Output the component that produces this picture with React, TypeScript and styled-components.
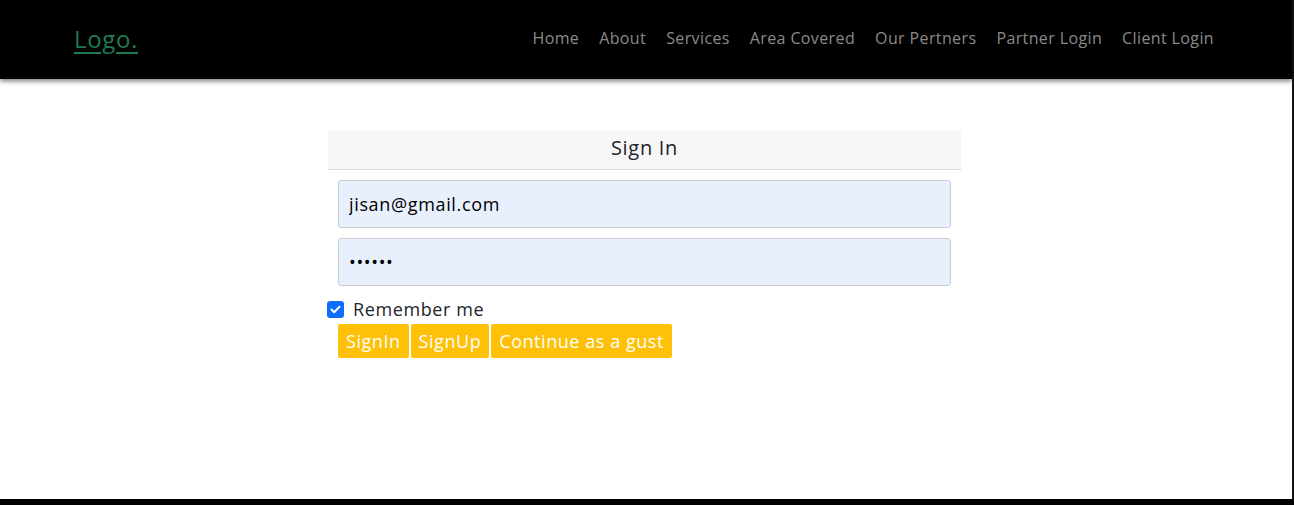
import React from "react";
import styled, { createGlobalStyle } from "styled-components";

const Global = createGlobalStyle`
  html, body { margin: 0; padding: 0; background: #000; }
  body { font-family: "Open Sans", "Noto Sans", sans-serif; letter-spacing: 0.6px; }
  * { box-sizing: border-box; }
`;

const Page = styled.div`
  width: 1292px;
  height: 499px;
  background: #fff;
  display: flex;
  flex-direction: column;
  box-shadow: 2px 0 0 #141414;
`;

const Header = styled.header`
  height: 79px;
  background: #000;
  display: flex;
  align-items: center;
  justify-content: space-between;
  padding: 0 78px 3px 74px;
  box-shadow: 0 2px 5px rgba(0, 0, 0, 0.55);
  position: relative;
  z-index: 1;
`;

const Logo = styled.a`
  color: #1f7a52;
  font-size: 24px;
  text-decoration: underline;
  text-underline-offset: 4px;
  text-decoration-thickness: 2px;
  font-weight: 400;
  letter-spacing: 0.65px;
`;

const Nav = styled.nav`
  display: flex;
  gap: 20px;
`;

const NavLink = styled.a`
  color: #8a8a8a;
  font-size: 16px;
  font-weight: 400;
  text-decoration: none;
  letter-spacing: 0.38px;
`;

const Main = styled.main`
  flex: 1;
  padding: 51px 0 0 328px;
`;

const Card = styled.div`
  width: 633px;
  display: flex;
  flex-direction: column;
`;

const CardHeader = styled.div`
  height: 40px;
  background: #f7f7f7;
  border-bottom: 1px solid #dcdcdc;
  display: flex;
  align-items: center;
  justify-content: center;
  padding-bottom: 5px;
  font-size: 20px;
  font-weight: 500;
  color: #212529;
  letter-spacing: 0.7px;
`;

const Fields = styled.div`
  display: flex;
  flex-direction: column;
  gap: 10px;
  padding: 10px 10px 0;
`;

const Input = styled.input`
  height: 48px;
  width: 613px;
  background: #e8f0fe;
  border: 1px solid #c9ccd1;
  border-radius: 3px;
  padding: 0 10px;
  font-family: inherit;
  font-size: 18px;
  letter-spacing: 0.65px;
  color: #000;
  outline: none;
`;

const RememberRow = styled.label`
  display: flex;
  align-items: center;
  gap: 9px;
  margin: 13px 0 0 -1px;
  font-size: 18px;
  color: #212529;
  height: 20px;
`;

const Check = styled.span`
  width: 17px;
  height: 17px;
  border-radius: 3px;
  background: #0d6efd;
  display: flex;
  align-items: center;
  justify-content: center;
`;

const Buttons = styled.div`
  display: flex;
  gap: 2px;
  margin: 5px 0 0 10px;
`;

const Button = styled.button`
  height: 34px;
  padding: 0 8px;
  background: #ffc107;
  border: none;
  border-radius: 2px;
  color: #fff;
  font-family: inherit;
  font-size: 18px;
  letter-spacing: 0.55px;
  cursor: pointer;
`;

const links = [
  "Home",
  "About",
  "Services",
  "Area Covered",
  "Our Pertners",
  "Partner Login",
  "Client Login",
];

export default function App() {
  return (
    <>
      <Global />
      <Page>
        <Header>
          <Logo href="#">Logo.</Logo>
          <Nav>
            {links.map((l) => (
              <NavLink key={l} href="#">
                {l}
              </NavLink>
            ))}
          </Nav>
        </Header>
        <Main>
          <Card>
            <CardHeader>Sign In</CardHeader>
            <Fields>
              <Input type="email" defaultValue="jisan@gmail.com" />
              <Input type="password" defaultValue="123456" />
            </Fields>
            <RememberRow>
              <Check>
                <svg width="11" height="9" viewBox="0 0 11 9">
                  <path
                    d="M1.5 4.5 L4.2 7.2 L9.5 1.8"
                    fill="none"
                    stroke="#fff"
                    strokeWidth="2"
                    strokeLinecap="round"
                    strokeLinejoin="round"
                  />
                </svg>
              </Check>
              Remember me
            </RememberRow>
            <Buttons>
              <Button>SignIn</Button>
              <Button>SignUp</Button>
              <Button>Continue as a gust</Button>
            </Buttons>
          </Card>
        </Main>
      </Page>
    </>
  );
}
